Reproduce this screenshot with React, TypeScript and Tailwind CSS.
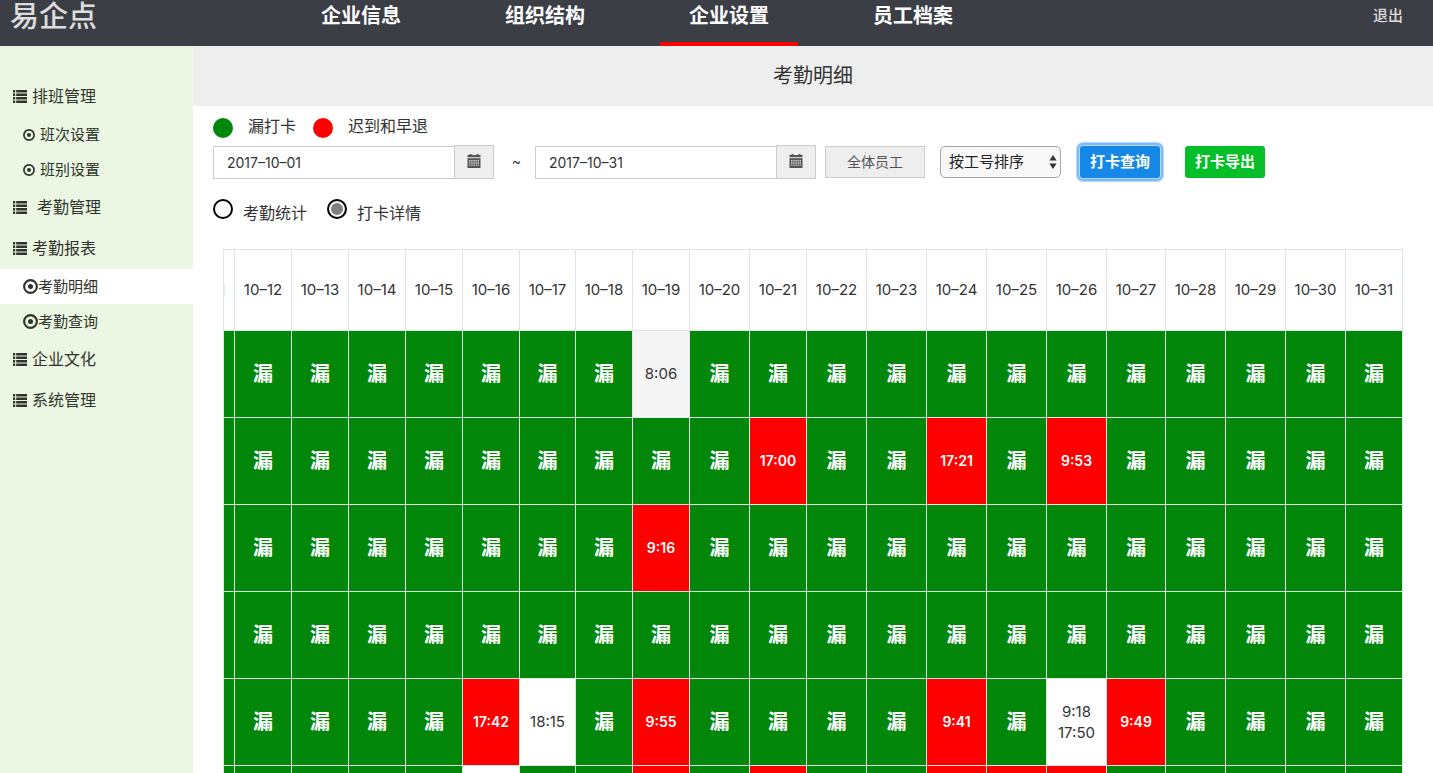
import { useState } from "react";
import clsx from "clsx";

type Status = "missed" | "late" | "normal" | "hover";
type Cell = { status: Status; times?: string[] };

const NAV = ["企业信息", "组织结构", "企业设置", "员工档案"];

type MenuEntry =
  | { kind: "group"; label: string; wide?: boolean }
  | { kind: "item"; label: string; large?: boolean; active?: boolean };

const MENU: MenuEntry[] = [
  { kind: "group", label: "排班管理" },
  { kind: "item", label: "班次设置" },
  { kind: "item", label: "班别设置" },
  { kind: "group", label: "考勤管理", wide: true },
  { kind: "group", label: "考勤报表" },
  { kind: "item", label: "考勤明细", large: true, active: true },
  { kind: "item", label: "考勤查询", large: true },
  { kind: "group", label: "企业文化" },
  { kind: "group", label: "系统管理" },
];

const DAYS = Array.from({ length: 20 }, (_, i) => i + 12);
const COLUMN_WIDTHS = [57, 57, 57, 57, 57, 56, 57, 57, 60, 57, 60, 60, 60, 60, 60, 59, 60, 60, 60, 57];

const late = (...times: string[]): Cell => ({ status: "late", times });
const normal = (...times: string[]): Cell => ({ status: "normal", times });

/* Each record holds only the days on which the employee clocked in. */
const RECORDS: Record<number, Cell>[] = [
  { 19: { status: "hover", times: ["8:06"] } },
  { 21: late("17:00"), 24: late("17:21"), 26: late("9:53") },
  { 19: late("9:16") },
  {},
  {
    16: late("17:42"),
    17: normal("18:15"),
    19: late("9:55"),
    24: late("9:41"),
    26: normal("9:18", "17:50"),
    27: late("9:49"),
  },
];

const NEXT_RECORD: Record<number, Status> = { 16: "normal", 19: "late", 21: "late", 24: "late", 25: "late", 26: "late" };

const CELL_STYLE: Record<Status, string> = {
  missed: "bg-[#02870a] text-[20px] font-bold text-white",
  late: "bg-[#ff0000] pb-px text-[14px] font-semibold text-white",
  normal: "bg-white pb-px text-[15px] text-[#333333]",
  hover: "bg-[#f5f5f5] pb-px text-[15px] text-[#333333]",
};

function ListIcon() {
  return (
    <svg viewBox="0 0 14 13" className="h-[13px] w-[14px] shrink-0" fill="currentColor" aria-hidden="true">
      {[0, 3.5, 7, 10.5].map((y) => (
        <g key={y}>
          <rect x="0" y={y} width="2.2" height="2.5" />
          <rect x="3.2" y={y} width="10.8" height="2.5" />
        </g>
      ))}
    </svg>
  );
}

function TargetIcon({ large }: { large?: boolean }) {
  return (
    <svg viewBox="0 0 24 24" className={clsx("shrink-0", large ? "size-[15px]" : "size-3")} fill="none" aria-hidden="true">
      <circle cx="12" cy="12" r="10.2" stroke="currentColor" strokeWidth="3.4" />
      <circle cx="12" cy="12" r="4" fill="currentColor" />
    </svg>
  );
}

function CalendarIcon() {
  return (
    <svg viewBox="0 0 14 14" className="size-[14px]" aria-hidden="true">
      <path d="M0.5 1h2V0h2v1h5V0h2v1h2v2.2h-13z" fill="#555" />
      <path d="M0.5 4.2h13V14h-13z" fill="#555" />
      <path
        d="M2 6h1.5v1.4H2zM4.2 6h1.5v1.4H4.2zM6.4 6h1.5v1.4H6.4zM8.6 6h1.5v1.4H8.6zM10.7 6h1.3v1.4h-1.3zM2 8.3h1.5v1.4H2zM4.2 8.3h1.5v1.4H4.2zM6.4 8.3h1.5v1.4H6.4zM8.6 8.3h1.5v1.4H8.6zM10.7 8.3h1.3v1.4h-1.3zM2 10.6h1.5v1.2H2zM4.2 10.6h1.5v1.2H4.2zM6.4 10.6h1.5v1.2H6.4zM8.6 10.6h1.5v1.2H8.6zM10.7 10.6h1.3v1.2h-1.3z"
        fill="#ccc"
      />
    </svg>
  );
}

function DateField({ label, value }: { label: string; value: string }) {
  return (
    <div className="flex w-[281px] items-end">
      <input
        type="text"
        aria-label={label}
        defaultValue={value}
        className="h-[33px] min-w-0 flex-1 border border-r-0 border-[#cccccc] bg-white px-[13px] text-[14px] text-[#333333] outline-none"
      />
      <button
        type="button"
        aria-label={`选择${label}`}
        className="flex h-[34px] w-10 items-center justify-center border border-[#cccccc] bg-[#eeeeee] pb-0.5"
      >
        <CalendarIcon />
      </button>
    </div>
  );
}

function Header() {
  return (
    <header className="flex h-[46px] shrink-0 items-start bg-[#3c3e46] text-white">
      <div className="w-[292px] shrink-0 pl-[10px] text-[29px] leading-[34px] font-medium text-[#dddddd]">易企点</div>
      <nav className="flex h-full flex-1 gap-[46px]">
        {NAV.map((label) => (
          <a
            key={label}
            href="#"
            className={clsx(
              "h-full w-[138px] border-b-4 text-center text-[20px] leading-8 font-bold",
              label === "企业设置" ? "border-[#ff0000]" : "border-transparent",
            )}
          >
            {label}
          </a>
        ))}
      </nav>
      <a href="#" className="pr-[30px] text-[15px] leading-8 font-medium text-[#dddddd]">
        退出
      </a>
    </header>
  );
}

function Sidebar() {
  return (
    <aside className="w-[193px] shrink-0 bg-[#ebf7e2] pt-[30px] text-[#2f332c]">
      <ul>
        {MENU.map((entry) => (
          <li key={entry.label}>
            {entry.kind === "group" ? (
              <a
                href="#"
                className={clsx("flex h-[41px] items-center pl-[13px] text-[16px]", entry.wide ? "gap-[10px]" : "gap-[5px]")}
              >
                <ListIcon />
                <span className="pb-0.5">{entry.label}</span>
              </a>
            ) : (
              <a
                href="#"
                className={clsx(
                  "flex h-[35px] items-center pl-[23px] text-[15px]",
                  entry.large ? "gap-0" : "gap-[5px]",
                  entry.active && "bg-white",
                )}
              >
                <TargetIcon large={entry.large} />
                <span className="pt-0.5">{entry.label}</span>
              </a>
            )}
          </li>
        ))}
      </ul>
    </aside>
  );
}

function Filters() {
  const [view, setView] = useState("detail");
  const views = [
    { id: "summary", label: "考勤统计" },
    { id: "detail", label: "打卡详情" },
  ];
  return (
    <div className="px-5 pt-[11px] text-[#333333]">
      <div className="flex h-5 items-center text-[16px]">
        <span className="mt-[2px] mr-[15px] size-5 rounded-full bg-[#02870a]" />
        <span className="pb-0.5">漏打卡</span>
        <span className="mt-[2px] mr-[15px] ml-[17px] size-5 rounded-full bg-[#ff0000]" />
        <span className="pb-0.5">迟到和早退</span>
      </div>

      <form className="mt-2 flex flex-wrap items-center" onSubmit={(e) => e.preventDefault()}>
        <DateField label="开始日期" value="2017–10–01" />
        <span className="w-[41px] pb-1 pl-1 text-center text-[14px]">~</span>
        <DateField label="结束日期" value="2017–10–31" />
        <button
          type="button"
          className="ml-[9px] h-8 w-[100px] border border-[#cccccc] bg-[#eeeeee] pb-0.5 text-[14px] text-[#555555]"
        >
          全体员工
        </button>
        <div className="relative ml-[15px]">
          <select
            aria-label="排序方式"
            className="block h-8 w-[121px] appearance-none rounded-[5px] border border-[#a6a6a6] bg-[#f8f8f8] pl-2 text-[15px] text-[#222222]"
          >
            <option>按工号排序</option>
          </select>
          <svg viewBox="0 0 8 14" className="pointer-events-none absolute top-[9px] right-1 h-[14px] w-2" aria-hidden="true">
            <path d="M4 0l3.6 5.6H0.4zM4 14L0.4 8.4h7.2z" fill="#333" />
          </svg>
        </div>
        <button
          type="submit"
          className="ml-[19px] h-8 w-20 rounded-[3px] bg-[#1588e8] text-[15px] font-bold text-white shadow-[0_0_0_1px_#b5d8fb,0_0_0_3px_#7cb9fb,0_0_1px_4px_#b5d8fb]"
        >
          打卡查询
        </button>
        <button type="button" className="ml-[25px] h-8 w-20 rounded-[3px] bg-[#04bf28] text-[15px] font-bold text-white">
          打卡导出
        </button>
      </form>

      <div className="mt-5 flex gap-5 text-[16px]">
        {views.map((v) => (
          <label key={v.id} className="flex items-start gap-[10px]">
            <input
              type="radio"
              name="view"
              checked={view === v.id}
              onChange={() => setView(v.id)}
              className="size-5 appearance-none rounded-full border-2 border-black bg-white checked:bg-[#808080] checked:shadow-[inset_0_0_0_2px_#ffffff]"
            />
            <span className="pt-1 leading-5">{v.label}</span>
          </label>
        ))}
      </div>
    </div>
  );
}

function AttendanceTable() {
  return (
    <div className="mx-[30px] mt-[26px]">
      <table className="w-full table-fixed border-collapse text-center">
        <colgroup>
          <col className="w-[11px]" />
          {COLUMN_WIDTHS.map((width, i) => (
            <col key={i} style={{ width }} />
          ))}
        </colgroup>
        <thead>
          <tr className="h-[81px]">
            <td className="border border-[#dfe6e6] p-0">
              <div className="h-3 w-px bg-[#d5f1f5]" />
            </td>
            {DAYS.map((day) => (
              <th key={day} scope="col" className="border border-[#dfe6e6] p-0 text-[15px] font-normal whitespace-nowrap text-[#333333]">
                10–{day}
              </th>
            ))}
          </tr>
        </thead>
        <tbody>
          {RECORDS.map((record, row) => (
            <tr key={row} className="h-[87px]">
              <td className="border border-[#dfe6e6] bg-[#02870a] p-0" />
              {DAYS.map((day) => {
                const cell: Cell = record[day] ?? { status: "missed" };
                return (
                  <td key={day} className={clsx("border border-[#dfe6e6] leading-[21px]", CELL_STYLE[cell.status])}>
                    {cell.times ? cell.times.map((time) => <div key={time}>{time}</div>) : "漏"}
                  </td>
                );
              })}
            </tr>
          ))}
          <tr className="h-[87px]">
            <td className="border border-[#dfe6e6] bg-[#02870a] p-0" />
            {DAYS.map((day) => (
              <td key={day} className={clsx("border border-[#dfe6e6]", CELL_STYLE[NEXT_RECORD[day] ?? "missed"])} />
            ))}
          </tr>
        </tbody>
      </table>
    </div>
  );
}

export default function App() {
  return (
    <div className="flex h-screen flex-col overflow-hidden bg-white font-['Inter','Noto_Sans_CJK_SC',sans-serif]">
      <Header />
      <div className="flex min-h-0 flex-1">
        <Sidebar />
        <main className="min-w-0 flex-1">
          <h1 className="flex h-[60px] items-center justify-center bg-[#eeeeee] text-[20px] text-[#333333]">考勤明细</h1>
          <Filters />
          <AttendanceTable />
        </main>
      </div>
    </div>
  );
}
